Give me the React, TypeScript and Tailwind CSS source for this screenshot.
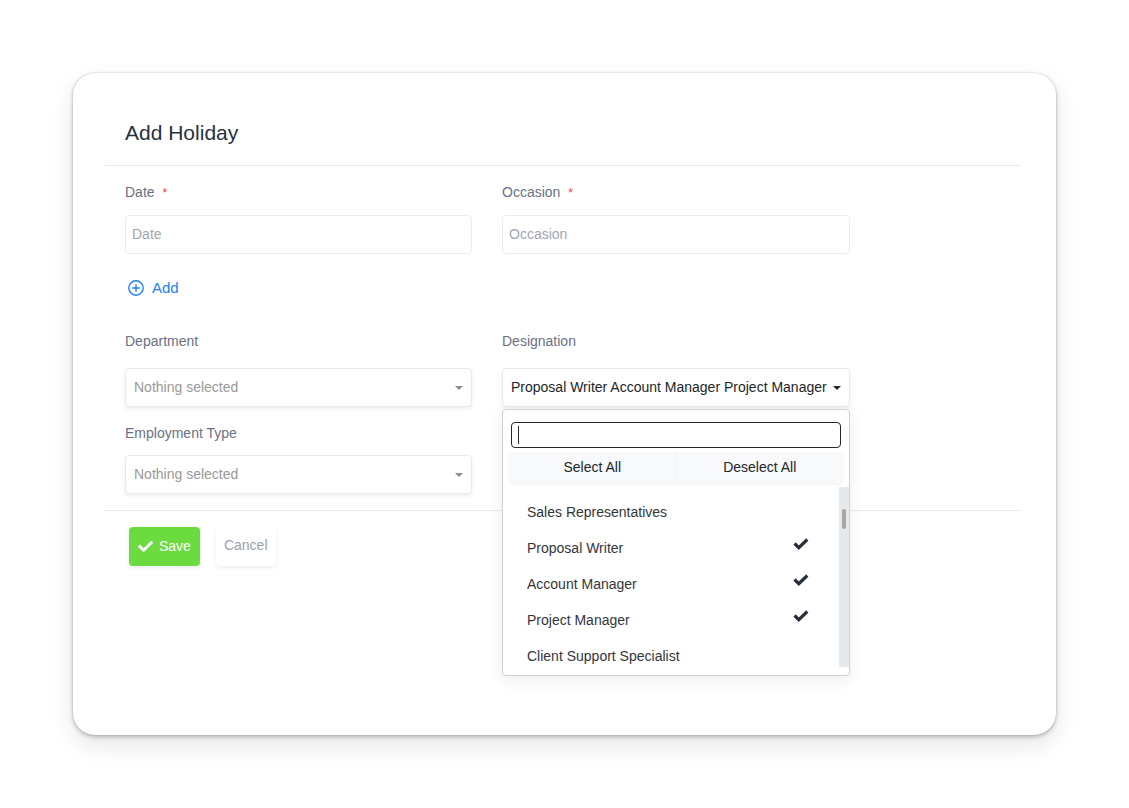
import { useState } from "react"
import type { InputHTMLAttributes, ReactNode } from "react"

const designations = [
    "Sales Representatives",
    "Proposal Writer",
    "Account Manager",
    "Project Manager",
    "Client Support Specialist",
]

function Caret({ className }: { className: string }) {
    return (
        <svg viewBox="0 0 8 4" fill="currentColor" aria-hidden="true" className={className}>
            <path d="M0 0h8L4 4z" />
        </svg>
    )
}

function SaveCheck() {
    return (
        <svg viewBox="0 0 512 512" fill="currentColor" aria-hidden="true" className="w-[15px] h-[15px]">
            <path d="M173.9 439.4l-166.4-166.4c-10-10-10-26.200 0-36.200l36.200-36.200c10-10 26.200-10 36.200 0L192 312.700 432.100 72.600c10-10 26.200-10 36.200 0l36.200 36.200c10 10 10 26.200 0 36.200l-294.400 294.400c-10 10-26.200 10-36.200 0z" />
        </svg>
    )
}

function OptionCheck() {
    return (
        <svg viewBox="0 0 16 12" fill="none" stroke="currentColor" strokeWidth="3.2" aria-hidden="true" className="w-4 h-3">
            <path d="M1.500 5.500L5.800 9.700L14.300 1.500" />
        </svg>
    )
}

type TextFieldProps = InputHTMLAttributes<HTMLInputElement> & { id: string; label: string }

function TextField({ id, label, ...rest }: TextFieldProps) {
    return (
        <div className="flex flex-col gap-[13px]">
            <label htmlFor={id} className="text-[14px] leading-5 text-[#6b7084]">
                {label} <span className="ml-1 text-[12px] leading-none text-[#f5404a]">*</span>
            </label>
            <input
                id={id}
                type="text"
                required
                className="h-[39px] w-full rounded border border-[#eaecef] bg-white px-[6px] pb-[2px] text-[14px] text-[#28313c] placeholder:text-[#a0a6b4] outline-none"
                {...rest}
            />
        </div>
    )
}

function SelectField({ id, label, className, children }: { id: string; label: string; className: string; children: ReactNode }) {
    return (
        <div className={className}>
            <label htmlFor={id} className="text-[14px] leading-5 text-[#6b7084]">
                {label}
            </label>
            <div className="grid items-center">
                <select
                    id={id}
                    className="col-start-1 row-start-1 h-[39px] w-full appearance-none rounded border border-[#e8eaee] bg-white pl-2 pr-8 text-[14px] text-[#999999] shadow-[0_2px_4px_rgba(0,0,0,0.07)] outline-none"
                >
                    {children}
                </select>
                <Caret className="pointer-events-none col-start-1 row-start-1 mr-[9px] h-1 w-2 justify-self-end text-[#8c8c8c]" />
            </div>
        </div>
    )
}

function DesignationPicker() {
    const [open, setOpen] = useState(true)
    const [search, setSearch] = useState("")
    const [selected, setSelected] = useState(["Proposal Writer", "Account Manager", "Project Manager"])

    const toggle = (name: string) => {
        setSelected(selected.includes(name) ? selected.filter((item) => item !== name) : [...selected, name])
    }

    const visible = designations.filter((name) => name.toLowerCase().includes(search.toLowerCase()))

    return (
        <div className="flex flex-col gap-[17px]">
            <span id="designation-label" className="text-[14px] leading-5 text-[#6b7084]">
                Designation
            </span>
            <div className="relative">
                <button
                    type="button"
                    aria-labelledby="designation-label"
                    aria-expanded={open}
                    onClick={() => setOpen(!open)}
                    className="flex h-[39px] w-full items-center justify-between rounded border border-[#e8eaee] bg-white px-2 text-[14px] text-[#222529] shadow-[0_2px_4px_rgba(0,0,0,0.07)]"
                >
                    <span className="min-w-0 overflow-hidden whitespace-nowrap">
                        {selected.length ? selected.join(" ") : "Nothing selected"}
                    </span>
                    <Caret className="h-1 w-2 shrink-0" />
                </button>

                {open && (
                    <div className="absolute left-0 top-full z-10 mt-[2px] w-full rounded border border-[#cfd1d4] bg-white pb-2 pt-3 shadow-[0_4px_16px_rgba(0,0,0,0.08)]">
                        <div className="relative px-2">
                            <input
                                type="text"
                                aria-label="Search designation"
                                value={search}
                                onChange={(e) => setSearch(e.target.value)}
                                className="block h-[26px] w-full rounded border border-[#222529] px-[6px] text-[14px] text-[#222529] caret-transparent outline-none"
                            />
                            {search === "" && (
                                <span className="pointer-events-none absolute left-[15px] top-1 h-[18px] w-px bg-[#222529]"></span>
                            )}
                        </div>
                        <div className="mx-[6px] mt-1 flex h-8 items-start rounded bg-[#f8f9fa] text-[14px] text-[#222529] shadow-[0_1px_2px_rgba(0,0,0,0.05)]">
                            <button type="button" onClick={() => setSelected(designations)} className="h-[30px] flex-1 border-r border-[#eff1f3]">
                                Select All
                            </button>
                            <button type="button" onClick={() => setSelected([])} className="h-[30px] flex-1">
                                Deselect All
                            </button>
                        </div>
                        <div className="mt-[3px] flex h-[180px]">
                            <ul className="min-w-0 flex-1 overflow-hidden pt-[7px]">
                                {visible.map((name) => (
                                    <li key={name}>
                                        <label className="flex h-9 cursor-pointer items-center justify-between pl-6 pr-[30px] text-[14px] text-[#33363b]">
                                            <input
                                                type="checkbox"
                                                className="sr-only"
                                                checked={selected.includes(name)}
                                                onChange={() => toggle(name)}
                                            />
                                            <span>{name}</span>
                                            {selected.includes(name) && (
                                                <span className="pb-2 text-[#28303d]">
                                                    <OptionCheck />
                                                </span>
                                            )}
                                        </label>
                                    </li>
                                ))}
                            </ul>
                            <div className="flex w-[10px] justify-center bg-[#e5e9eb] pt-[22px]">
                                <div className="h-5 w-1 rounded-full bg-[#a6a6a6]"></div>
                            </div>
                        </div>
                    </div>
                )}
            </div>
        </div>
    )
}

export function AddHoliday() {
    return (
        <main className="min-h-screen bg-white p-[73px] font-['Liberation_Sans',Arial,sans-serif]">
            <section className="rounded-[22px] bg-white pb-[169px] pl-8 pr-[35px] pt-11 shadow-[0_0_2px_rgba(0,0,0,0.2),0_2px_4px_rgba(0,0,0,0.22),0_10px_24px_rgba(0,0,0,0.1)]">
                <form onSubmit={(e) => e.preventDefault()}>
                    <h1 className="border-b border-[#e8eaec] pb-4 pl-5 text-[21px] leading-8 text-[#28313c]">
                        Add Holiday
                    </h1>

                    <div className="px-5 py-4">
                        <div className="grid grid-cols-[minmax(0,347px)_minmax(0,348px)] gap-x-[30px]">
                            <TextField id="date" label="Date" placeholder="Date" />
                            <TextField id="occasion" label="Occasion" placeholder="Occasion" />
                        </div>

                        <button type="button" className="ml-[3px] mt-[22px] flex h-6 items-center gap-2 text-[15px] text-[#1d82f5]">
                            <svg viewBox="0 0 16 16" fill="none" stroke="currentColor" strokeWidth="1.4" aria-hidden="true" className="h-4 w-4">
                                <circle cx="8" cy="8" r="7.200" />
                                <path d="M8 4.200v7.600M4.200 8h7.600" />
                            </svg>
                            Add
                        </button>

                        <div className="mt-[31px] grid grid-cols-[minmax(0,347px)_minmax(0,348px)] gap-x-[30px] gap-y-4">
                            <SelectField id="department" label="Department" className="flex flex-col gap-[17px]">
                                <option>Nothing selected</option>
                            </SelectField>
                            <DesignationPicker />
                            <SelectField id="employment-type" label="Employment Type" className="flex flex-col gap-3">
                                <option>Nothing selected</option>
                            </SelectField>
                        </div>
                    </div>

                    <div className="flex gap-4 border-t border-[#e8eaec] pl-6 pt-4 text-[14px]">
                        <button type="submit" className="flex h-[39px] items-center gap-[6px] rounded bg-[#6bdb40] px-[9px] text-white shadow-[0_2px_4px_rgba(0,0,0,0.07)]">
                            <SaveCheck />
                            Save
                        </button>
                        <button type="button" className="h-[39px] rounded bg-white px-2 pb-[2px] text-[#99a0b3] shadow-[0_2px_4px_rgba(0,0,0,0.07)]">
                            Cancel
                        </button>
                    </div>
                </form>
            </section>
        </main>
    )
}

export default AddHoliday
